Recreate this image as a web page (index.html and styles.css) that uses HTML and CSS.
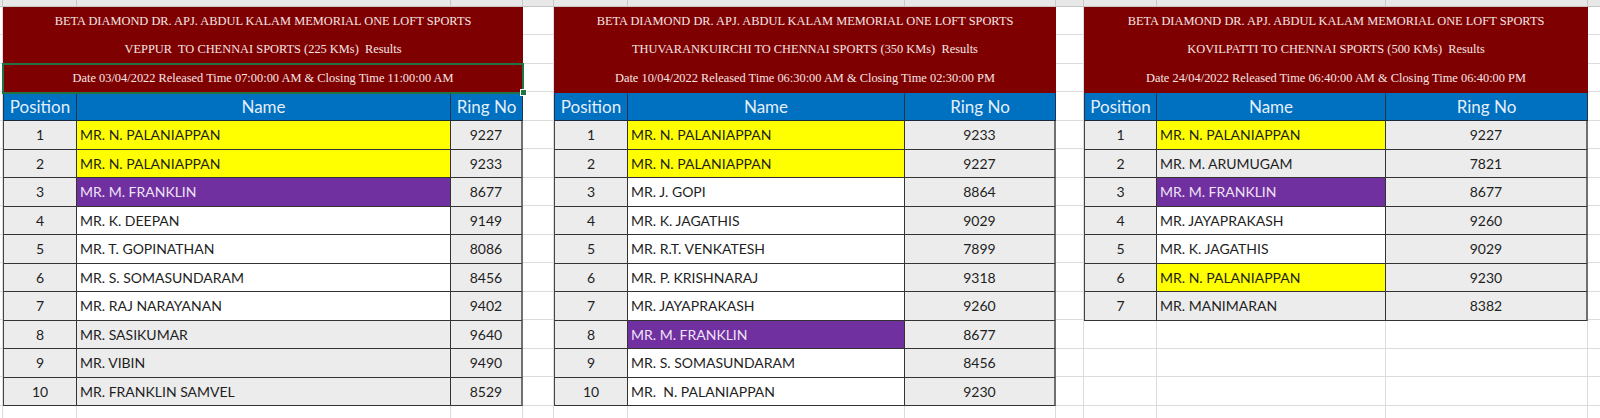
FILE: index.html
```html
<!DOCTYPE html>
<html>
<head>
<meta charset="utf-8">
<link rel="stylesheet" href="styles.css">
</head>
<body>
<div class="colheads">
  <span class="ch w3"></span><span class="ch w74"></span><span class="ch w374"></span><span class="ch w72"></span><span class="ch w31"></span><span class="ch w74"></span><span class="ch w277"></span><span class="ch w151"></span><span class="ch w28"></span><span class="ch w73"></span><span class="ch w229"></span><span class="ch w202"></span><span class="ch rest"></span>
</div>
<div class="sheet">
  <section class="results t1">
    <div class="title">BETA DIAMOND DR. APJ. ABDUL KALAM MEMORIAL ONE LOFT SPORTS</div>
    <div class="title">VEPPUR  TO CHENNAI SPORTS (225 KMs)  Results</div>
    <div class="title selected">Date 03/04/2022 Released Time 07:00:00 AM &amp; Closing Time 11:00:00 AM</div>
    <div class="th th-first">Position</div><div class="th">Name</div><div class="th">Ring No</div>
    <div class="pos">1</div><div class="name yellow">MR. N. PALANIAPPAN</div><div class="ring">9227</div>
    <div class="pos">2</div><div class="name yellow">MR. N. PALANIAPPAN</div><div class="ring">9233</div>
    <div class="pos">3</div><div class="name purple">MR. M. FRANKLIN</div><div class="ring">8677</div>
    <div class="pos">4</div><div class="name">MR. K. DEEPAN</div><div class="ring">9149</div>
    <div class="pos">5</div><div class="name">MR. T. GOPINATHAN</div><div class="ring">8086</div>
    <div class="pos">6</div><div class="name">MR. S. SOMASUNDARAM</div><div class="ring">8456</div>
    <div class="pos">7</div><div class="name">MR. RAJ NARAYANAN</div><div class="ring">9402</div>
    <div class="pos">8</div><div class="name grey">MR. SASIKUMAR</div><div class="ring">9640</div>
    <div class="pos">9</div><div class="name grey">MR. VIBIN</div><div class="ring">9490</div>
    <div class="pos">10</div><div class="name grey">MR. FRANKLIN SAMVEL</div><div class="ring">8529</div>
  </section>
  <section class="results t2">
    <div class="title">BETA DIAMOND DR. APJ. ABDUL KALAM MEMORIAL ONE LOFT SPORTS</div>
    <div class="title">THUVARANKUIRCHI TO CHENNAI SPORTS (350 KMs)  Results</div>
    <div class="title">Date 10/04/2022 Released Time 06:30:00 AM &amp; Closing Time 02:30:00 PM</div>
    <div class="th th-first">Position</div><div class="th">Name</div><div class="th">Ring No</div>
    <div class="pos">1</div><div class="name yellow">MR. N. PALANIAPPAN</div><div class="ring">9233</div>
    <div class="pos">2</div><div class="name yellow">MR. N. PALANIAPPAN</div><div class="ring">9227</div>
    <div class="pos">3</div><div class="name">MR. J. GOPI</div><div class="ring">8864</div>
    <div class="pos">4</div><div class="name">MR. K. JAGATHIS</div><div class="ring">9029</div>
    <div class="pos">5</div><div class="name">MR. R.T. VENKATESH</div><div class="ring">7899</div>
    <div class="pos">6</div><div class="name">MR. P. KRISHNARAJ</div><div class="ring">9318</div>
    <div class="pos">7</div><div class="name">MR. JAYAPRAKASH</div><div class="ring">9260</div>
    <div class="pos">8</div><div class="name purple">MR. M. FRANKLIN</div><div class="ring">8677</div>
    <div class="pos">9</div><div class="name">MR. S. SOMASUNDARAM</div><div class="ring">8456</div>
    <div class="pos">10</div><div class="name">MR.  N. PALANIAPPAN</div><div class="ring">9230</div>
  </section>
  <section class="results t3">
    <div class="title">BETA DIAMOND DR. APJ. ABDUL KALAM MEMORIAL ONE LOFT SPORTS</div>
    <div class="title">KOVILPATTI TO CHENNAI SPORTS (500 KMs)  Results</div>
    <div class="title">Date 24/04/2022 Released Time 06:40:00 AM &amp; Closing Time 06:40:00 PM</div>
    <div class="th th-first">Position</div><div class="th">Name</div><div class="th">Ring No</div>
    <div class="pos">1</div><div class="name yellow">MR. N. PALANIAPPAN</div><div class="ring">9227</div>
    <div class="pos">2</div><div class="name grey">MR. M. ARUMUGAM</div><div class="ring">7821</div>
    <div class="pos">3</div><div class="name purple">MR. M. FRANKLIN</div><div class="ring">8677</div>
    <div class="pos">4</div><div class="name">MR. JAYAPRAKASH</div><div class="ring">9260</div>
    <div class="pos">5</div><div class="name">MR. K. JAGATHIS</div><div class="ring">9029</div>
    <div class="pos">6</div><div class="name yellow">MR. N. PALANIAPPAN</div><div class="ring">9230</div>
    <div class="pos">7</div><div class="name grey">MR. MANIMARAN</div><div class="ring">8382</div>
  </section>
</div>
</body>
</html>
```
FILE: styles.css
```css
html, body {
  margin: 0;
  padding: 0;
  background: #ffffff;
}
body {
  width: 1600px;
  height: 418px;
  overflow: hidden;
  font-family: Lato, "Liberation Sans", sans-serif;
}

/* Excel column header strip (mostly cut off) */
.colheads {
  display: flex;
  height: 7px;
  background: #e8e8e8;
  box-sizing: border-box;
  border-bottom: 1px solid #c6c6c6;
}
.ch {
  box-sizing: border-box;
  border-right: 1px solid #c9c9c9;
  flex: none;
}
.w3 { width: 3px; }
.w74 { width: 74px; }
.w374 { width: 374px; }
.w72 { width: 72px; }
.w31 { width: 31px; }
.w277 { width: 277px; }
.w151 { width: 151px; }
.w28 { width: 28px; }
.w73 { width: 73px; }
.w229 { width: 229px; }
.w202 { width: 202px; }
.rest { flex: 1; border-right: none; }

/* sheet with gridlines */
.sheet {
  display: flex;
  align-items: flex-start;
  padding-left: 3px;
  height: 411px;
  box-sizing: border-box;
  background-color: #ffffff;
  background-image:
    linear-gradient(#dcdcdc, #dcdcdc),
    linear-gradient(#dcdcdc, #dcdcdc),
    linear-gradient(#dcdcdc, #dcdcdc),
    linear-gradient(#dcdcdc, #dcdcdc),
    linear-gradient(#dcdcdc, #dcdcdc),
    linear-gradient(#dcdcdc, #dcdcdc),
    linear-gradient(#dcdcdc, #dcdcdc),
    linear-gradient(#dcdcdc, #dcdcdc),
    linear-gradient(#dcdcdc, #dcdcdc),
    linear-gradient(#dcdcdc, #dcdcdc),
    linear-gradient(#dcdcdc, #dcdcdc),
    linear-gradient(#dcdcdc, #dcdcdc),
    repeating-linear-gradient(to bottom, transparent 0 27.5px, #dcdcdc 27.5px 28.5px);
  background-size:
    1px 100%, 1px 100%, 1px 100%, 1px 100%, 1px 100%, 1px 100%,
    1px 100%, 1px 100%, 1px 100%, 1px 100%, 1px 100%, 1px 100%,
    100% 100%;
  background-position:
    2px 0, 76px 0, 450px 0, 522px 0, 553px 0, 627px 0,
    904px 0, 1055px 0, 1083px 0, 1156px 0, 1385px 0, 1587px 0,
    0 0;
  background-repeat: no-repeat;
}

.results {
  display: grid;
  grid-auto-rows: 28.5px;
  flex: none;
}
.t1 { grid-template-columns: 74px 374px 72px; width: 520px; }
.t2 { grid-template-columns: 74px 277px 151px; width: 502px; margin-left: 31px; }
.t3 { grid-template-columns: 73px 229px 202px; width: 504px; margin-left: 28px; }

.results > div {
  box-sizing: border-box;
  display: flex;
  align-items: center;
  white-space: pre;
  overflow: hidden;
}

.title {
  grid-column: 1 / -1;
  justify-content: center;
  background: #7f0000;
  color: #f5e6e6;
  font-family: "Liberation Serif", "Times New Roman", serif;
  font-size: 12.4px;
}
.results > .title.selected {
  position: relative;
  overflow: visible;
  outline: 2px solid #217346;
  outline-offset: -1px;
}
.title.selected::after {
  content: "";
  position: absolute;
  right: -4px;
  bottom: -3px;
  width: 5px;
  height: 5px;
  background: #217346;
  border: 1px solid #ffffff;
}

.th {
  justify-content: center;
  background: #0070c0;
  color: #e4effa;
  font-size: 17px;
  border-right: 1px solid #1d3550;
  border-bottom: 1px solid #1d2a38;
}
.th-first {
  border-left: 1px solid #1d3550;
}

.pos, .name, .ring {
  font-size: 14px;
  color: #1e1e1e;
  border-bottom: 1px solid #333333;
}
.pos {
  justify-content: center;
  background: #ececec;
  border-left: 1px solid #444444;
  border-right: 1px solid #333333;
}
.name {
  justify-content: flex-start;
  padding-left: 3px;
  background: #ffffff;
  border-right: 1px solid #333333;
}
.ring {
  justify-content: center;
  background: #ececec;
  border-right: 2px solid #707070;
}
.name.yellow { background: #ffff00; }
.name.grey { background: #ececec; }
.name.purple { background: #7030a0; color: #efe3f7; }
```
